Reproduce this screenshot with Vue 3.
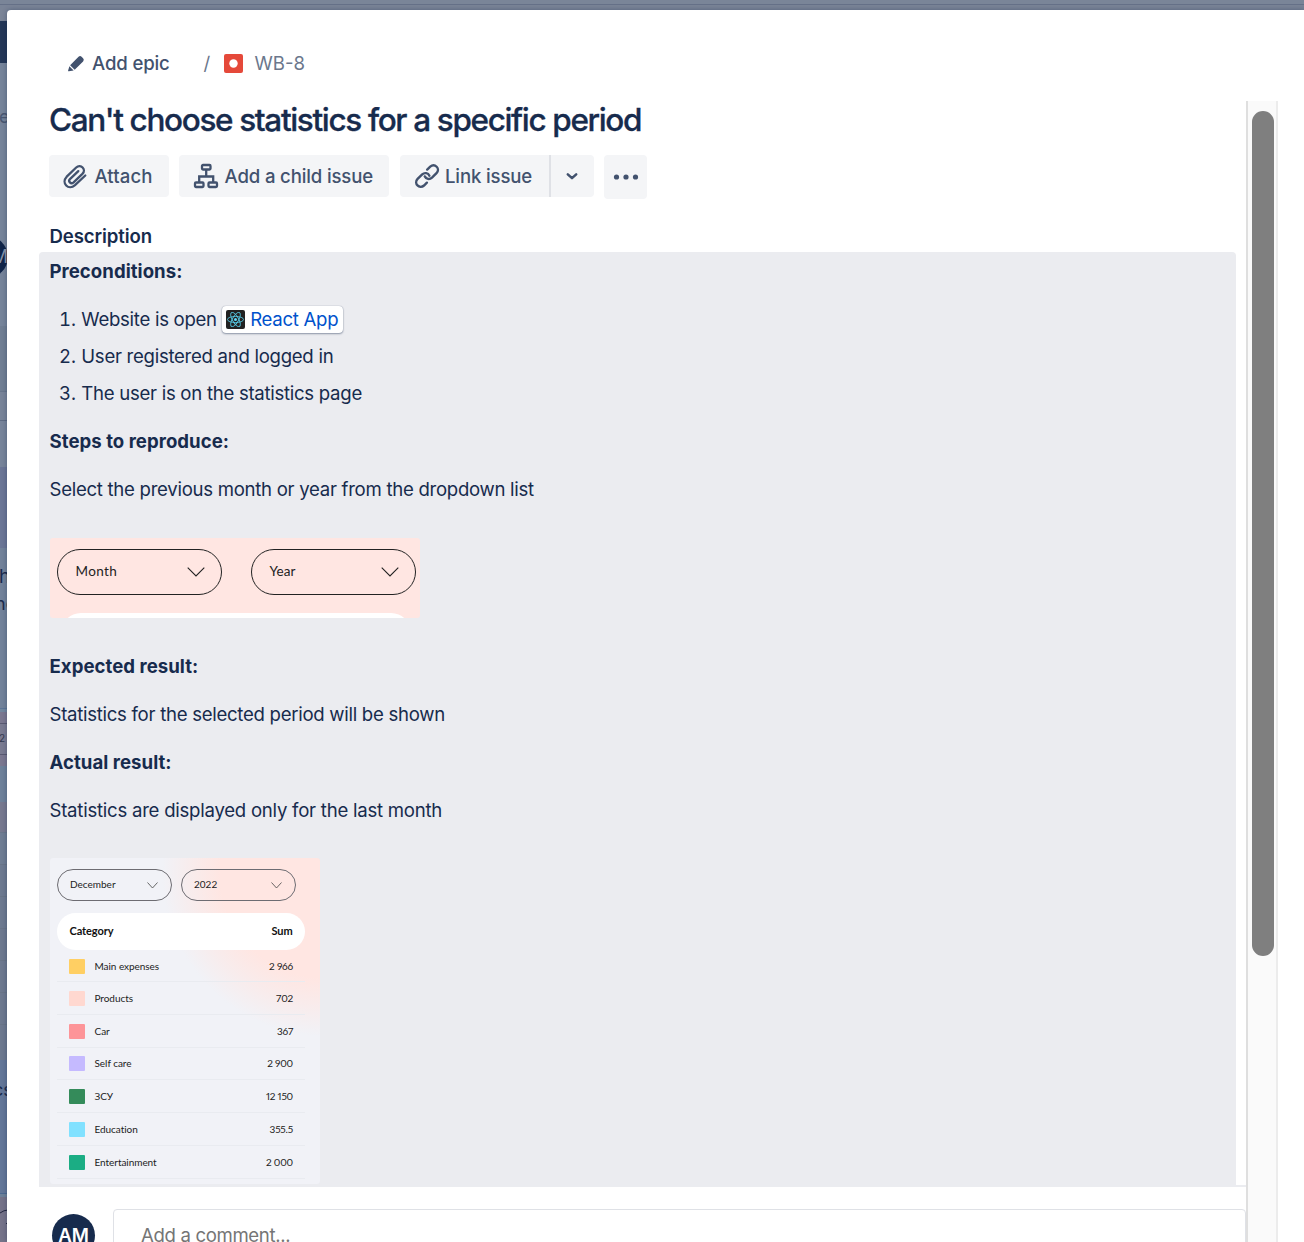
<script setup>
const steps = ['User registered and logged in', 'The user is on the statistics page']
const rows = [
  { name: 'Main expenses', sum: '2 966', color: '#ffcf63' },
  { name: 'Products', sum: '702', color: '#ffd8d0' },
  { name: 'Car', sum: '367', color: '#fd9498' },
  { name: 'Self care', sum: '2 900', color: '#c5baff' },
  { name: 'ЗСУ', sum: '12 150', color: '#348b5a' },
  { name: 'Education', sum: '355.5', color: '#81e1ff' },
  { name: 'Entertainment', sum: '2 000', color: '#1bad84' },
]
// Slices of the dimmed board that show beside the dialog
const slices = [
  { h: 5, c: '#7a8598', b: '#667188' },
  { h: 16, c: '#7a8497' },
  { h: 42, c: '#243757' },
  { h: 263, c: '#76849a' },
  { h: 66, c: '#707e93', b: '#68768c' },
  { h: 29, c: '#788499', b: '#5e6b83' },
  { h: 46, c: '#77849a' },
  { h: 81, c: '#6b7696' },
  { h: 161, c: '#72829a', b: '#5d7596' },
  { h: 3, c: '#72879f' },
  { h: 12, c: '#7b7890', b: '#5a5a72' },
  { h: 31, c: '#7a7b91', b: '#5a5a72' },
  { h: 11, c: '#7b7890' },
  { h: 36, c: '#6e819a' },
  { h: 31, c: '#77798f', b: '#6a778b' },
  { h: 32, c: '#6f7d93', b: '#697588' },
  { h: 32, c: '#6d7a90', b: '#697588' },
  { h: 32, c: '#6d7a90', b: '#697588' },
  { h: 32, c: '#6d798f', b: '#697588' },
  { h: 32, c: '#6d798f', b: '#697588' },
  { h: 32, c: '#6d798f', b: '#697588' },
  { h: 35, c: '#6d798f' },
  { h: 134, c: '#637799', b: '#4d6a91' },
  { h: 3, c: '#6d8199' },
  { h: 45, c: '#757389' },
]
const peeks = [
  { t: 'e', y: 105, x: -1, s: 18, c: '#4a5872' },
  { t: 'h', y: 565, x: -1, s: 19, c: '#1b2b4d' },
  { t: 'no', y: 592, x: -5, s: 18, c: '#1b2b4d' },
  { t: '2', y: 726, x: -1, s: 10, c: '#33394f' },
  { t: 'cs', y: 1078, x: -7, s: 18, c: '#1b2b4d' },
]
</script>

<template>
  <div class="page">
    <div class="board">
      <div v-for="(s, i) in slices" :key="i" class="slice" :style="{ height: s.h + 'px', background: s.c, borderBottomColor: s.b || s.c }"></div>
      <span v-for="p in peeks" :key="p.t" class="peek" :style="{ top: p.y + 'px', left: p.x + 'px', fontSize: p.s + 'px', color: p.c }">{{ p.t }}</span>
      <div class="disc">M</div>
      <svg class="arc" width="8" height="34" viewBox="0 0 8 34" fill="none" stroke="#22263e"><path d="M0 5Q4 2 8 2M6 16l2-2" /></svg>
    </div>
    <main class="dialog">
      <nav class="crumbs">
        <svg class="pencil" width="17" height="17" viewBox="0 0 16 16" fill="#42526e"><path d="M2 9.600 9.900 1.700q1.500-1.400 2.900 0l1.400 1.400q1.400 1.400 0 2.900L6.300 13.900Z" /><path d="M1.300 10.500 5.300 14.500.8 15.400Q-.1 15.400.1 14.500Z" /></svg>
        <span class="epic">Add epic</span>
        <span class="slash">/</span>
        <svg class="bug" width="19" height="19" viewBox="0 0 19 19"><rect width="19" height="19" rx="2" fill="#e5493a" /><circle cx="9.500" cy="9.500" r="4.200" fill="#fff" /></svg>
        <span class="key">WB-8</span>
      </nav>
      <div class="body">
        <section class="content">
          <h1>Can't choose statistics for a specific period</h1>
          <div class="actions">
            <button class="btn attach">
              <svg width="26" height="26" viewBox="0 0 26 26" fill="none" stroke="#42526e" stroke-width="2.300" stroke-linecap="round" stroke-linejoin="round"><path d="M23.300 12.500 13 22.200C6.500 28 -1.200 20 4.700 13.700L14.200 4.500C18.600.3 24.800 6.500 20.400 10.900L11.600 19.300C8.800 21.700 5.600 18.400 8.200 15.800L16.300 8.100" /></svg>
              <span>Attach</span>
            </button>
            <button class="btn child">
              <svg width="26" height="26" viewBox="0 0 26 26" fill="none" stroke="#42526e" stroke-width="2.300"><rect x="9" y="2" width="8.500" height="4.500" rx="1" /><rect x="2" y="19.500" width="8.500" height="4.500" rx="1" /><rect x="15.500" y="19.500" width="8.500" height="4.500" rx="1" /><path d="M13.200 7v6M6.200 19v-5.500h14V19" /></svg>
              <span>Add a child issue</span>
            </button>
            <div class="split">
              <button class="btn link">
                <svg width="26" height="26" viewBox="0 0 26 26" fill="none" stroke="#42526e" stroke-width="2.400" stroke-linecap="round"><path d="M13.200 6.600 16.200 3.700C20.700-.2 26.800 5.600 22.500 10.200L18 14.700C15.500 16.900 12.200 16.200 10.800 13.400" /><path d="M12.900 19.700 10 22.500C5.500 26.400-.7 20.500 3.600 15.900L8.200 11.400C10.600 9.200 14.100 9.900 15.400 12.700" /></svg>
                <span>Link issue</span>
              </button>
              <button class="btn drop" aria-label="More link options">
                <svg width="14" height="10" viewBox="0 0 14 10" fill="none" stroke="#42526e" stroke-width="2.500" stroke-linecap="round" stroke-linejoin="round"><path d="M2.800 3.300 7 7.200l4.200-3.900" /></svg>
              </button>
            </div>
            <button class="btn more" aria-label="Actions">
              <svg width="26" height="6" viewBox="0 0 26 6" fill="#42526e"><circle cx="3.500" cy="3" r="2.600" /><circle cx="13" cy="3" r="2.600" /><circle cx="22.500" cy="3" r="2.600" /></svg>
            </button>
          </div>
          <h2>Description</h2>
          <div class="clip">
            <div class="panel">
              <p><b>Preconditions:</b></p>
              <ol>
                <li><i>1.</i><span>Website is open</span>
                  <a class="card">
                    <svg width="19" height="19" viewBox="0 0 19 19"><rect width="19" height="19" rx="2" fill="#222" /><g fill="none" stroke="#55c5df" stroke-width=".9"><ellipse cx="9.500" cy="9.500" rx="8" ry="3.100" /><ellipse cx="9.500" cy="9.500" rx="8" ry="3.100" transform="rotate(60 9.500 9.500)" /><ellipse cx="9.500" cy="9.500" rx="8" ry="3.100" transform="rotate(120 9.500 9.500)" /></g><circle cx="9.500" cy="9.500" r="1.500" fill="#61dafb" /></svg>
                    <span>React App</span>
                  </a>
                </li>
                <li v-for="(s, i) in steps" :key="s"><i>{{ i + 2 }}.</i><span>{{ s }}</span></li>
              </ol>
              <p><b>Steps to reproduce:</b></p>
              <p>Select the previous month or year from the dropdown list</p>
              <figure class="shot1">
                <div v-for="n in ['Month', 'Year']" :key="n" class="pill">
                  <span>{{ n }}</span>
                  <svg width="18" height="10" viewBox="0 0 18 10" fill="none" stroke="#222" stroke-width="1.100"><path d="M.7.700 9 9 17.300.7" /></svg>
                </div>
                <div class="sheet"></div>
              </figure>
              <p><b>Expected result:</b></p>
              <p>Statistics for the selected period will be shown</p>
              <p><b>Actual result:</b></p>
              <p class="last">Statistics are displayed only for the last month</p>
              <figure class="shot2">
                <div class="filters">
                  <div v-for="n in ['December', '2022']" :key="n" class="mini">
                    <span>{{ n }}</span>
                    <svg width="11" height="7" viewBox="0 0 11 7" fill="none" stroke="#444" stroke-width=".8"><path d="M.5.500 5.500 6 10.500.5" /></svg>
                  </div>
                </div>
                <div class="thead"><span>Category</span><span>Sum</span></div>
                <div v-for="r in rows" :key="r.name" class="row">
                  <div class="swatch" :style="{ background: r.color }"></div>
                  <span class="name">{{ r.name }}</span>
                  <span class="sum">{{ r.sum }}</span>
                </div>
              </figure>
            </div>
          </div>
          <footer>
            <div class="avatar">AM</div>
            <div class="comment"><span>Add a comment...</span></div>
          </footer>
        </section>
        <div class="track"><div class="thumb"></div></div>
      </div>
    </main>
  </div>
</template>

<style>
body { margin: 0; overflow: hidden; }
</style>

<style scoped>
* { box-sizing: border-box; }
.page { position: relative; width: 1304px; height: 1242px; overflow: hidden; background: #6c778d; font-family: Inter, "Liberation Sans", sans-serif; font-size: 18.600px; color: #172b4d; padding: 10px 0 0 7px; }
.board { position: absolute; inset: 0; overflow: hidden; }
.slice { border-bottom: 1px solid; }
.slice:nth-child(n+3) { width: 7px; }
.peek { position: absolute; line-height: 24px; white-space: nowrap; }
.disc { position: absolute; left: -34px; top: 236px; width: 42px; height: 42px; border-radius: 50%; background: #102448; color: #8994a8; text-align: right; line-height: 42px; font-size: 18px; }
.arc { position: absolute; left: 0; top: 1208px; }
.dialog { position: relative; height: 1232px; background: #fff; border-top-left-radius: 4px; box-shadow: 0 0 5px rgba(9, 30, 66, .35); display: flex; flex-direction: column; }
.crumbs { height: 91px; flex: none; padding: 15px 0 0 61px; display: flex; align-items: center; line-height: 28px; }
.epic { margin-left: 7px; width: 111.500px; font-weight: 500; letter-spacing: -.150px; color: #42526e; }
.slash { width: 20.500px; color: #6b778c; }
.key { margin-left: 11.500px; color: #6b778c; }
.body { flex: 1; display: flex; min-height: 0; }
.content { width: 1239px; padding-left: 32px; display: flex; flex-direction: column; }
h1 { margin: 0 0 0 10px; font-size: 31.500px; line-height: 38px; height: 54px; font-weight: 500; -webkit-text-stroke: .300px #172b4d; letter-spacing: -1.350px; white-space: nowrap; }
.actions { display: flex; padding-left: 10px; height: 44px; align-items: flex-start; }
.btn { border: 0; padding: 0; height: 42px; border-radius: 4px; background: #f4f5f7; color: #42526e; display: flex; align-items: center; font: 500 18.600px Inter, sans-serif; letter-spacing: -.150px; white-space: nowrap; }
.btn svg { flex: none; }
.attach { width: 120px; padding-left: 13px; gap: 6.500px; margin-right: 10px; letter-spacing: .1px; }
.child { width: 210px; padding-left: 14px; gap: 5.500px; margin-right: 11px; }
.split { display: flex; margin-right: 10px; }
.link { width: 149px; padding-left: 14px; gap: 5px; border-radius: 4px 0 0 4px; }
.drop { width: 45px; padding-right: 2px; justify-content: center; border-left: 2px solid #dfe1e6; border-radius: 0 4px 4px 0; }
.more { width: 43px; height: 44px; justify-content: center; }
h2 { margin: 23px 0 2px 10.500px; font-size: 18.600px; line-height: 28px; font-weight: 600; letter-spacing: -.1px; }
.clip { height: 935px; flex: none; overflow: hidden; border-bottom: 2px solid #ebecf0; }
.panel { width: 1197px; height: 960px; background: #ebecf0; border-radius: 4px; padding: 5px 0 0 10.500px; letter-spacing: -.285px; }
p { margin: 0 0 20px; line-height: 28px; height: 28px; white-space: nowrap; }
.last { letter-spacing: -.250px; }
b { font-weight: 700; letter-spacing: .040px; }
ol { list-style: none; margin: 0 0 20px; padding: 0; display: flex; flex-direction: column; gap: 9px; }
li { display: flex; height: 28px; line-height: 28px; white-space: nowrap; }
i { font-style: normal; width: 26.500px; text-align: right; margin-right: 5.300px; letter-spacing: 0; font-variant-numeric: tabular-nums; }
.card { margin: .500px 0 0 5px; height: 27px; display: flex; align-items: center; gap: 5.300px; padding: 0 5px 0 4px; background: #fff; border-radius: 4px; color: #0052cc; box-shadow: 0 1px 2px rgba(9, 30, 66, .4), 0 0 1px rgba(9, 30, 66, .4); }
figure { margin: 0; font-family: Lato, sans-serif; letter-spacing: 0; color: #222; overflow: hidden; border-radius: 3px; }
.shot1 { margin: 35px 0 34px .5px; width: 370px; height: 80px; background: #ffe6e2; display: flex; flex-wrap: wrap; align-content: flex-start; gap: 18px 29px; padding: 11px 0 0 7px; }
.pill { width: 165px; height: 46px; border: 1.300px solid #222; border-radius: 23px; display: flex; align-items: center; justify-content: space-between; padding: 0 16px 0 17.500px; font-size: 13.500px; letter-spacing: .4px; }
.pill:nth-child(2) { letter-spacing: .1px; }
.pill span { margin-top: -2px; }
.sheet { width: 350px; height: 40px; margin-left: 4px; background: #fff; border-radius: 20px; }
.shot2 { margin: 34px 0 0 .5px; width: 270px; height: 326px; padding: 11px 15px 0 7px; font-size: 10px; background: radial-gradient(circle at 275px 15px, #ffe6e2 0 105px, rgba(255, 230, 226, .5) 135px, transparent 163px), #f1f2f7; }
.filters { display: flex; gap: 9px; height: 44px; }
.mini { width: 115px; height: 32px; border: 1px solid #6d6c72; border-radius: 16px; display: flex; align-items: center; justify-content: space-between; padding: 0 13px 0 12px; }
.mini span { margin-top: -2px; }
.thead { height: 37px; border-radius: 18.500px; background: #fff; display: flex; justify-content: space-between; padding: 0 12.500px; line-height: 35px; font-weight: 700; font-size: 11px; letter-spacing: -.1px; color: #111; }
.row { height: 32.750px; border-bottom: 1px solid #e9ebf0; display: flex; align-items: center; padding: 0 12px; }
.thead + .row { height: 32px; }
.swatch { width: 15.500px; height: 15px; border-radius: 1px; margin: 1px 10px 0 0; }
.name { flex: 1; letter-spacing: -.050px; }
.sum { font-variant-numeric: proportional-nums; letter-spacing: -.2px; }
footer { height: 55px; display: flex; padding: 22px 0 0 13px; }
.avatar { width: 43px; height: 43px; margin: 5px 18px 0 0; border-radius: 50%; background: #172b4d; color: #fff; text-align: center; line-height: 43px; font-weight: 600; }
.comment { flex: 1; height: 60px; border: 1px solid #dfe1e6; border-radius: 4px; padding: 11px 27px; line-height: 28px; letter-spacing: -.350px; color: #757575; }
.track { width: 32px; background: #fafafa; border-left: 2px solid #dfdfdf; border-right: 2px solid #ececec; padding: 10px 2px 0 4px; }
.thumb { height: 845px; border-radius: 11px; background: #7f7f7f; }
</style>
